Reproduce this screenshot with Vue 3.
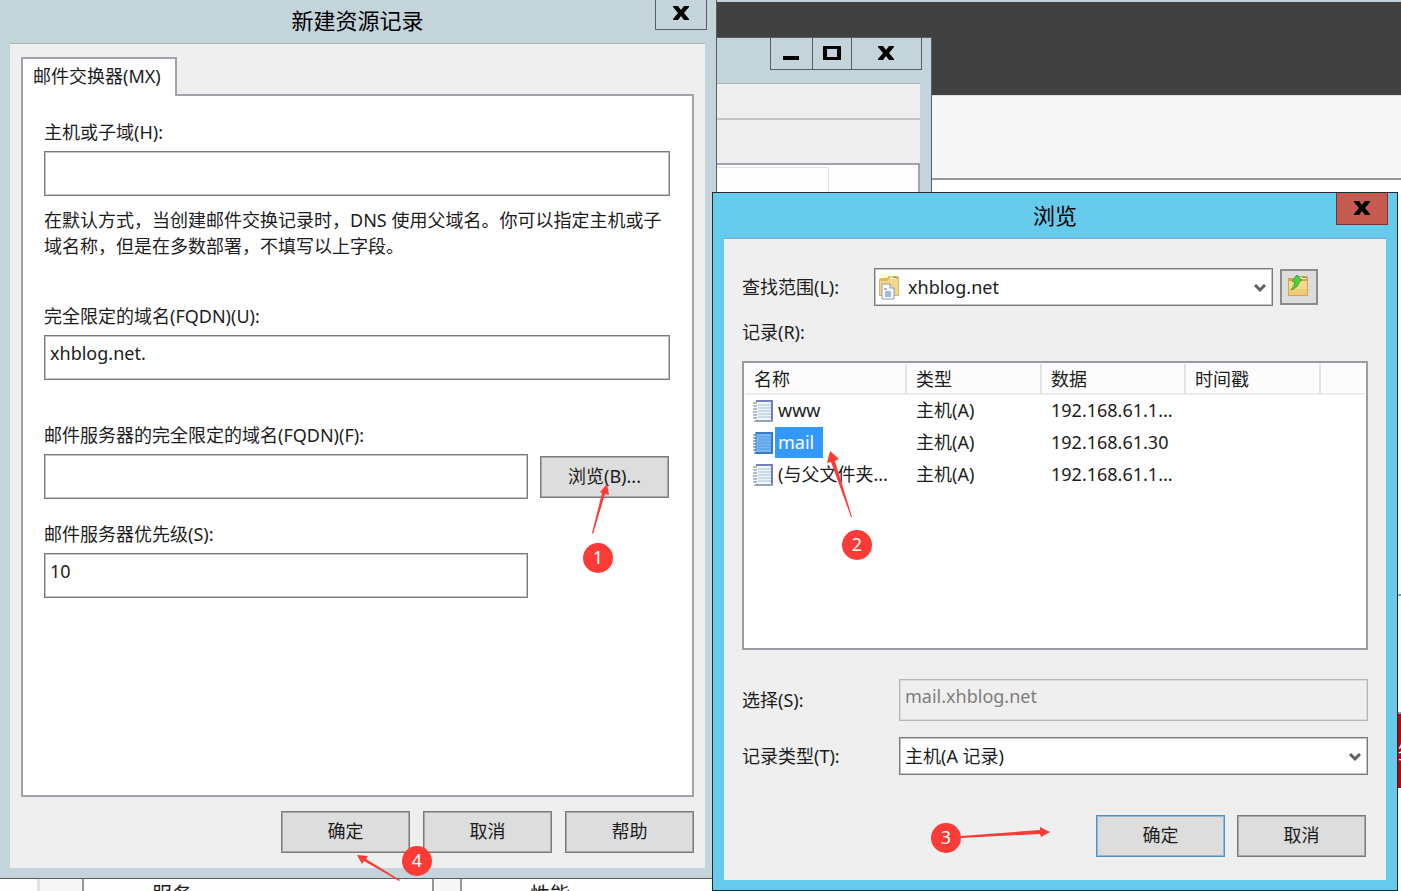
<script setup>
import { ref } from 'vue'

const host = ref('')
const fqdn = ref('xhblog.net.')
const server = ref('')
const priority = ref('10')
const zone = ref('xhblog.net')
const recordType = ref('主机(A 记录)')
const selection = ref('mail.xhblog.net')
const selected = ref(1)

const columns = ['名称', '类型', '数据', '时间戳', '']
const records = [
  { name: 'www', type: '主机(A)', data: '192.168.61.1...' },
  { name: 'mail', type: '主机(A)', data: '192.168.61.30' },
  { name: '(与父文件夹...', type: '主机(A)', data: '192.168.61.1...' },
]

const steps = [
  { n: 1, x: 598, y: 558, arrow: '607,484 609,495 605,494 593,534 592,533 602,493 600,492' },
  { n: 2, x: 857, y: 545, arrow: '830,451 839,459 835,461 852,517 851,517 831,462 827,463' },
  { n: 3, x: 946, y: 838, arrow: '1050,832 1041,837 1040,834 961,838 961,836 1040,830 1040,827' },
  { n: 4, x: 417, y: 861, arrow: '357,855 368,856 366,859 400,880 399,881 364,861 362,864' },
]
</script>

<template>
  <main class="desktop">
    <div class="page-top">
      <div class="page-dark"></div>
      <div class="page-bar"></div>
    </div>
    <div class="page-side"></div>
    <div class="red-tab"><span>签</span></div>

    <div class="strip">
      <div class="strip-cell a"></div>
      <div class="strip-cell b"></div>
      <div class="strip-cell c">服务</div>
      <div class="strip-cell d"></div>
      <div class="strip-cell e">性能</div>
    </div>

    <section class="window back-window" aria-label="DNS">
      <div class="caption-buttons">
        <button class="cap cap-min" aria-label="最小化">
          <svg width="16" height="14" viewBox="0 0 16 14"><path d="M0 10h16v4H0z" /></svg>
        </button>
        <button class="cap cap-max" aria-label="最大化">
          <svg width="18" height="14" viewBox="0 0 18 14"><path fill-rule="evenodd" d="M0 0h18v14H0zM4 3v8h10V3z" /></svg>
        </button>
        <button class="cap cap-close" aria-label="关闭">
          <svg width="16" height="14" viewBox="0 0 16 14"><path d="M0 0h5l3 4 3-4h5v1l-5 6 5 6v1h-5l-3-4-3 4H0v-1l5-6-5-6z" /></svg>
        </button>
      </div>
      <div class="back-client">
        <div class="back-menu"></div>
        <div class="back-tools"></div>
        <div class="back-list"><div class="back-head"></div></div>
      </div>
    </section>

    <section class="window record-window" aria-label="新建资源记录">
      <header class="titlebar">
        <h1>新建资源记录</h1>
        <button class="close" aria-label="关闭">
          <svg width="16" height="14" viewBox="0 0 16 14"><path d="M0 0h5l3 4 3-4h5v1l-5 6 5 6v1h-5l-3-4-3 4H0v-1l5-6-5-6z" /></svg>
        </button>
      </header>
      <form class="client record-client" @submit.prevent>
        <button type="button" class="tab">邮件交换器(MX)</button>
        <div class="panel">
          <label for="host">主机或子域(H):</label>
          <input id="host" v-model="host" class="box" type="text" />
          <p>在默认方式，当创建邮件交换记录时，DNS 使用父域名。你可以指定主机或子域名称，但是在多数部署，不填写以上字段。</p>
          <label for="fqdn">完全限定的域名(FQDN)(U):</label>
          <input id="fqdn" v-model="fqdn" class="box" type="text" />
          <label for="server" class="far">邮件服务器的完全限定的域名(FQDN)(F):</label>
          <div class="server-row">
            <input id="server" v-model="server" class="box" type="text" />
            <button type="button" class="btn">浏览(B)...</button>
          </div>
          <label for="priority" class="near">邮件服务器优先级(S):</label>
          <div class="server-row">
            <input id="priority" v-model="priority" class="box" type="text" />
            <span class="btn-space"></span>
          </div>
        </div>
        <footer class="actions">
          <button class="btn">确定</button>
          <button type="button" class="btn">取消</button>
          <button type="button" class="btn">帮助</button>
        </footer>
      </form>
    </section>

    <section class="window browse-window" aria-label="浏览">
      <header class="titlebar">
        <h1>浏览</h1>
        <button class="close" aria-label="关闭">
          <svg width="16" height="14" viewBox="0 0 16 14"><path d="M0 0h5l3 4 3-4h5v1l-5 6 5 6v1h-5l-3-4-3 4H0v-1l5-6-5-6z" /></svg>
        </button>
      </header>
      <form class="client browse-client" @submit.prevent>
        <div class="lookup">
          <label for="zone">查找范围(L):</label>
          <div class="combo with-icon">
            <svg class="combo-icon" width="22" height="24" viewBox="0 0 22 24">
              <path d="M1 4q0-2 2-2h6l2-2h9q1 0 1 2v18H1z" fill="#dfb760" />
              <path d="M2 5h7l2-2h9v16H2z" fill="#f3d58b" />
              <path d="M12 1h6v2h-6z" fill="#fff3c9" />
              <path d="M15 1h3v1h-3z" fill="#5d9bd8" />
              <path d="M4 8h8l4 4v11H4z" fill="#fbfdff" stroke="#8f9aa6" />
              <path d="M12 8v4h4" fill="#dfe8f2" stroke="#8f9aa6" />
              <path d="M6 13h3M7 16h6M7 18h6M7 20h6" stroke="#3f7cc4" />
            </svg>
            <select id="zone" v-model="zone"><option>xhblog.net</option></select>
            <svg class="chevron" width="12" height="9" viewBox="0 0 12 9"><path d="M1 1l5 5 5-5" fill="none" stroke="#606060" stroke-width="3" /></svg>
          </div>
          <button type="button" class="up" aria-label="上一级">
            <svg width="22" height="22" viewBox="0 0 22 22">
              <path d="M1 3h9l2-2h8q1 0 1 2v18H1z" fill="#d2a650" />
              <path d="M2 6h18v14H2z" fill="#f5d98d" />
              <path d="M2 14h18v6H2z" fill="#efcb74" />
              <path d="M11 2h8v2h-8z" fill="#fff1c0" />
              <path d="M15 2h4v1h-4z" fill="#4d90d9" />
              <path d="M4 15q3-3 4-8L5 6l5-6 5 5-3 2q0 5-8 8z" fill="#52d03b" stroke="#37a72b" />
            </svg>
          </button>
        </div>
        <div id="records-label" class="records-label">记录(R):</div>
        <div class="list">
          <table aria-labelledby="records-label">
            <colgroup><col class="c1" /><col class="c2" /><col class="c3" /><col class="c4" /><col /></colgroup>
            <thead>
              <tr><th v-for="(c, i) in columns" :key="i">{{ c }}</th></tr>
            </thead>
            <tbody>
              <tr v-for="(r, i) in records" :key="r.name" :class="{ selected: i === selected }" @click="selected = i">
                <td class="name">
                  <svg width="22" height="24" viewBox="0 0 22 24">
                    <path class="page" d="M3 1h18v22H3z" />
                    <path class="lines" d="M6 6h13M6 9h13M6 12h13M6 15h13M6 18h13" />
                    <path class="edge" d="M4 2h16v20" />
                    <path class="base" d="M4 22h17" />
                    <path class="coil" d="M1 4h4M1 7h4M1 10h4M1 13h4M1 16h4M1 19h4M2 22h3" />
                  </svg><span>{{ r.name }}</span>
                </td>
                <td>{{ r.type }}</td>
                <td>{{ r.data }}</td>
                <td></td>
                <td></td>
              </tr>
            </tbody>
          </table>
        </div>
        <div class="field">
          <label for="selection">选择(S):</label>
          <input id="selection" v-model="selection" class="box" type="text" disabled />
        </div>
        <div class="field">
          <label for="type">记录类型(T):</label>
          <div class="combo">
            <select id="type" v-model="recordType"><option>主机(A 记录)</option></select>
            <svg class="chevron" width="12" height="9" viewBox="0 0 12 9"><path d="M1 1l5 5 5-5" fill="none" stroke="#606060" stroke-width="3" /></svg>
          </div>
        </div>
        <footer class="actions">
          <button class="btn default">确定</button>
          <button type="button" class="btn">取消</button>
        </footer>
      </form>
    </section>

    <svg class="steps" width="1401" height="891" viewBox="0 0 1401 891">
      <g v-for="s in steps" :key="s.n">
        <polygon :points="s.arrow" />
        <circle :cx="s.x" :cy="s.y" r="15" />
        <text :x="s.x" :y="s.y + 6">{{ s.n }}</text>
      </g>
    </svg>
  </main>
</template>

<style>
body {
  margin: 0;
}
</style>

<style scoped>
.desktop {
  position: relative;
  height: 100vh;
  min-height: 860px;
  overflow: hidden;
  background: #fff;
  color: #1c1c1c;
  font: 18px/26px "Noto Sans", "Noto Sans CJK SC", sans-serif;
}
.desktop * {
  box-sizing: border-box;
}
button,
input,
select {
  margin: 0;
  border-radius: 0;
  color: inherit;
  font: inherit;
}
svg {
  display: block;
}

/* Page behind the windows */
.page-top {
  border-top: 2px solid #c3d4da;
  border-bottom: 2px solid #979797;
}
.page-dark {
  height: 93px;
  background: #414141;
}
.page-bar {
  height: 83px;
  border-top: 1px solid #dcdcdc;
  background: #f7f7f7;
}
.page-side {
  position: absolute;
  top: 594px;
  right: 0;
  width: 4px;
  height: 118px;
  border-top: 2px solid #979797;
  background: #f8f8f8;
}
.red-tab {
  position: absolute;
  top: 712px;
  right: 0;
  width: 3px;
  height: 76px;
  overflow: hidden;
  border-top: 2px solid #979797;
  background: #c40000;
  color: #fff;
  line-height: 76px;
}
.strip {
  position: absolute;
  left: 0;
  right: 684px;
  bottom: 0;
  display: flex;
  height: 13px;
  overflow: hidden;
  background: #fdfdfd;
  font-size: 20px;
}
.strip-cell {
  flex: none;
  padding-top: 4px;
  height: 40px;
}
.a {
  width: 40px;
  border-right: 3px solid #e2e2e2;
}
.b {
  width: 42px;
  background: #f7f7f7;
}
.c {
  width: 352px;
  padding-left: 68px;
  border: solid #979797;
  border-width: 0 2px;
}
.d {
  width: 26px;
  background: #f7f7f7;
}
.e {
  flex: 1;
  padding-left: 68px;
  border-left: 2px solid #979797;
}

/* Windows */
.window {
  position: absolute;
  display: flex;
  flex-direction: column;
  background: #c3d4da;
}
.back-window {
  top: 37px;
  left: 600px;
  right: 469px;
  height: 220px;
  border: 1px solid #5c5c66;
}
.caption-buttons {
  display: flex;
  align-self: flex-end;
  margin-right: 9px;
  border: 1px solid #5c5c66;
  border-top: 0;
}
.cap {
  display: flex;
  align-items: center;
  justify-content: center;
  height: 31px;
  padding: 0 1px 1px 0;
  border: 0;
  background: none;
}
.cap-min {
  width: 42px;
  border-right: 1px solid #5c5c66;
}
.cap-max {
  width: 39px;
  border-right: 1px solid #5c5c66;
}
.cap-close {
  width: 69px;
}
.back-client {
  display: flex;
  flex: 1;
  flex-direction: column;
  margin: 13px 11px 0 0;
  border-top: 1px solid #a9b3b8;
  background: #efefef;
}
.back-menu {
  height: 36px;
  border-bottom: 2px solid #c3c3c3;
}
.back-tools {
  height: 43px;
}
.back-list {
  flex: 1;
  padding-top: 2px;
  border: 2px solid #a0a3aa;
  background: #fdfdfd;
}
.back-head {
  width: 226px;
  height: 30px;
  border: 1px solid #e3e3e3;
}
.record-window {
  top: 0;
  bottom: 12px;
  left: 0;
  right: 684px;
  padding: 0 11px 10px 10px;
  border: solid #5c5c66;
  border-width: 0 1px 1px 0;
}
.browse-window {
  top: 192px;
  bottom: 0;
  left: 712px;
  right: 3px;
  padding: 0 11px 10px;
  border: 1px solid #232a2e;
  background: #66caea;
}
.titlebar {
  position: relative;
  flex: none;
  height: 43px;
  color: #000;
}
.browse-window .titlebar {
  height: 45px;
}
h1 {
  margin: 0;
  font-size: 22px;
  font-weight: 400;
  line-height: 40px;
  text-align: center;
}
.browse-window h1 {
  line-height: 44px;
}
.close {
  position: absolute;
  top: 0;
  right: -2px;
  display: flex;
  align-items: center;
  justify-content: center;
  width: 52px;
  height: 30px;
  padding: 0 0 3px;
  border: 1px solid #5c5c66;
  border-top: 0;
  background: none;
}
.browse-window .close {
  height: 32px;
  padding: 0 0 1px;
  border-color: #6d3733;
  background: #c45a50;
}
.client {
  display: flex;
  flex: 1;
  flex-direction: column;
  border-top: 1px solid #a9b3b8;
  background: #efefef;
}
.browse-client {
  padding: 29px 18px 23px;
  border-color: #7ba7c4;
}
.record-client {
  padding: 13px 11px 15px;
}

/* Controls */
.box {
  display: block;
  width: 100%;
  height: 45px;
  padding: 0 5px 10px;
  border: 1px solid #7b7b7b;
  outline: 0;
  background: #fff;
  box-shadow: inset 0 0 0 1px #c4c4c4;
}
.box:disabled {
  height: 42px;
  padding-bottom: 8px;
  border-color: #b3b6ba;
  background: #efefef;
  box-shadow: inset 0 0 0 1px #d8dadc;
  color: #7d7d7d;
}
.btn {
  flex: none;
  width: 129px;
  height: 42px;
  padding: 0 0 2px;
  border: 1px solid #7b7b7b;
  background: #ddd;
  box-shadow: inset 0 0 0 1px #a9a9a9;
}
.btn.default {
  border-color: #4f94c8;
  box-shadow: inset 0 0 0 1px #92b8d4;
}
.combo {
  position: relative;
  flex: 1;
}
.combo select {
  display: block;
  width: 100%;
  height: 38px;
  padding: 0 5px;
  border: 1px solid #7b7b7b;
  outline: 0;
  appearance: none;
  background: #fff;
  box-shadow: inset 0 0 0 1px #c4c4c4;
}
.with-icon select {
  padding-left: 33px;
}
.combo-icon {
  position: absolute;
  top: 8px;
  left: 4px;
}
.chevron {
  position: absolute;
  top: 16px;
  right: 7px;
}
.actions {
  display: flex;
  flex: none;
  justify-content: flex-end;
}

/* Record dialog */
.tab {
  z-index: 1;
  align-self: flex-start;
  height: 39px;
  margin-bottom: -2px;
  padding: 0 14px 4px 10px;
  border: 2px solid #a0a3aa;
  border-bottom: 0;
  background: #fff;
}
.panel {
  flex: 1;
  padding: 23px 22px 0 21px;
  border: 2px solid #a0a3aa;
  background: #fff;
}
.panel label {
  display: block;
  margin-bottom: 6px;
}
.panel .far {
  margin-top: 42px;
}
.panel .near {
  margin-top: 22px;
}
p {
  margin: 11px 0 44px;
}
.server-row {
  display: flex;
  align-items: center;
  gap: 12px;
  padding-right: 1px;
}
.server-row .box {
  flex: 1;
  min-width: 0;
}
.btn-space {
  width: 129px;
}
.record-client .actions {
  gap: 13px;
  margin-top: 14px;
}

/* Browse dialog */
.lookup {
  display: flex;
  align-items: center;
  padding-right: 50px;
}
.lookup label {
  width: 132px;
}
.up {
  display: flex;
  align-items: center;
  justify-content: center;
  width: 38px;
  height: 36px;
  margin-left: 7px;
  padding: 0 2px 2px 0;
  border: 2px solid #8c8c8c;
  background: #ddd;
}
.records-label {
  margin: 13px 0 16px;
}
.list {
  flex: 1;
  margin-bottom: 29px;
  padding: 1px;
  border: 2px solid #989da4;
  background: #fff;
}
table {
  width: 100%;
  table-layout: fixed;
  border-collapse: separate;
  border-spacing: 0;
}
.c1 {
  width: 162px;
}
.c2,
.c4 {
  width: 135px;
}
.c3 {
  width: 144px;
}
th {
  height: 31px;
  padding: 0 0 0 9px;
  border-right: 2px solid #e3e3e3;
  border-bottom: 2px solid #ebebeb;
  background: #fcfcfc;
  font-weight: 400;
  text-align: left;
}
th:last-child {
  border-right: 0;
}
td {
  height: 32px;
  padding: 0 0 1px 9px;
  line-height: 31px;
  white-space: nowrap;
}
.name {
  display: flex;
  align-items: center;
  padding-left: 7px;
}
.name span {
  margin-left: 1px;
  padding: 0 9px 0 3px;
}
.selected .name span {
  background: #3399ff;
  color: #fff;
}
.page {
  fill: #f1f5f8;
}
.lines {
  stroke: #9cc3d6;
}
.edge {
  fill: none;
  stroke: #7580b4;
  stroke-width: 2;
}
.base {
  stroke: #98a3b3;
  stroke-width: 2;
}
.coil {
  stroke: #8a8f96;
  stroke-width: 2;
  stroke-opacity: 0.6;
}
.selected .page {
  fill: #78b6f2;
}
.selected .lines {
  stroke: #4f9be6;
}
.selected .edge,
.selected .base {
  stroke: #3b78c6;
}
.selected .coil {
  stroke: #4b7fb6;
}
.field {
  display: flex;
  align-items: center;
  margin-bottom: 16px;
}
.field label {
  flex: none;
  width: 157px;
}
.browse-client .actions {
  gap: 12px;
  margin-top: 24px;
  padding-right: 2px;
}

/* Numbered step markers */
.steps {
  position: absolute;
  top: 0;
  left: 0;
  pointer-events: none;
  fill: #fc3a36;
}
.steps text {
  fill: #fff;
  text-anchor: middle;
}
</style>
